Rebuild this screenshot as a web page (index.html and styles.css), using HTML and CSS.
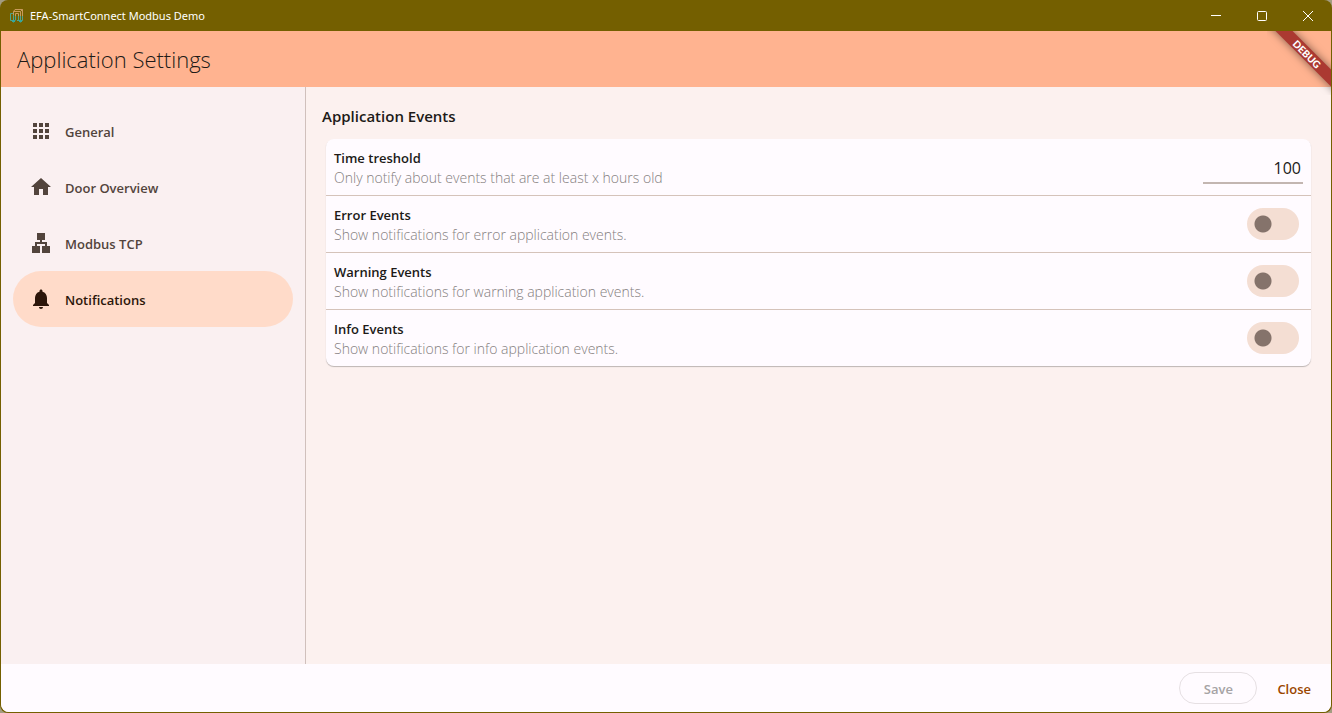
FILE: index.html
```html
<!DOCTYPE html>
<html lang="en">
<head>
<meta charset="utf-8">
<title>EFA-SmartConnect Modbus Demo</title>
<link rel="stylesheet" href="styles.css">
</head>
<body>
<div class="window">
  <header class="titlebar">
    <svg class="app-icon" viewBox="0 0 16 16" aria-hidden="true" fill="none">
      <path d="M4.500 7V3.500L6 1.500h7.500V8M4.500 3.500h7V8M6.500 8V5.500h3V8M11.500 3.500l2-2" stroke="#c99a5a"/>
      <path d="M4 5.500H1.500V12.500H5M4.500 7v7.500M6.500 8v4.500M9.500 8v4.500M8 12.500h5.500V8M11.500 8v6.500" stroke="#4fa58c"/>
      <path d="M3 12h3v2H3zM10 12h3v2h-3z" fill="#35a79c"/>
    </svg>
    <span class="window-title">EFA-SmartConnect Modbus Demo</span>
    <div class="window-controls">
      <button class="window-button" aria-label="Minimize"><svg viewBox="0 0 12 12"><path d="M1 5.500h10"/></svg></button>
      <button class="window-button" aria-label="Maximize"><svg viewBox="0 0 12 12"><rect x="1.500" y="1.500" width="9" height="9" rx="1"/></svg></button>
      <button class="window-button" aria-label="Close window"><svg viewBox="0 0 12 12"><path d="M1 1l10 10M11 1L1 11"/></svg></button>
    </div>
  </header>
  <div class="app">
    <div class="appbar"><h1 class="page-title">Application Settings</h1></div>
    <div class="debug-corner"><span class="debug-banner">DEBUG</span></div>
    <div class="content">
      <nav class="sidebar">
        <a class="nav-item" href="#general"><svg class="nav-icon" viewBox="0 0 24 24"><path d="M4 8h4V4H4zm6 12h4v-4h-4zm-6 0h4v-4H4zm0-6h4v-4H4zm6 0h4v-4h-4zm6-10v4h4V4zm-6 4h4V4h-4zm6 6h4v-4h-4zm0 6h4v-4h-4z"/></svg><span class="nav-label">General</span></a>
        <a class="nav-item" href="#doors"><svg class="nav-icon" viewBox="0 0 24 24"><path d="M10 20v-6h4v6h5v-8h3L12 3 2 12h3v8z"/></svg><span class="nav-label">Door Overview</span></a>
        <a class="nav-item" href="#modbus"><svg class="nav-icon" viewBox="0 0 24 24"><path d="M13 22h8v-7h-3v-4h-5V9h3V2H8v7h3v2H6v4H3v7h8v-7H8v-2h8v2h-3z"/></svg><span class="nav-label">Modbus TCP</span></a>
        <a class="nav-item nav-item-active" href="#notifications" aria-current="page"><svg class="nav-icon" viewBox="0 0 24 24"><path d="M12 22c1.100 0 2-.9 2-2h-4c0 1.100.89 2 2 2zm6-6v-5c0-3.070-1.640-5.640-4.500-6.320V4c0-.83-.67-1.500-1.500-1.500s-1.500.67-1.500 1.500v.68C7.630 5.360 6 7.920 6 11v5l-2 2v1h16v-1z"/></svg><span class="nav-label">Notifications</span></a>
      </nav>
      <main class="panel">
        <h2 class="section-title">Application Events</h2>
        <div class="card">
          <div class="row">
            <label class="row-text" for="threshold"><span class="row-title">Time treshold</span><span class="row-note">Only notify about events that are at least x hours old</span></label>
            <input class="number-field" id="threshold" type="text" inputmode="numeric" value="100">
          </div>
          <div class="row">
            <label class="row-text" for="errors"><span class="row-title">Error Events</span><span class="row-note">Show notifications for error application events.</span></label>
            <input class="switch" id="errors" type="checkbox" role="switch">
          </div>
          <div class="row">
            <label class="row-text" for="warnings"><span class="row-title">Warning Events</span><span class="row-note">Show notifications for warning application events.</span></label>
            <input class="switch" id="warnings" type="checkbox" role="switch">
          </div>
          <div class="row">
            <label class="row-text" for="infos"><span class="row-title">Info Events</span><span class="row-note">Show notifications for info application events.</span></label>
            <input class="switch" id="infos" type="checkbox" role="switch">
          </div>
        </div>
      </main>
    </div>
    <footer class="actions">
      <button class="button button-outlined" disabled>Save</button>
      <button class="button button-text">Close</button>
    </footer>
  </div>
</div>
</body>
</html>
```
FILE: styles.css
```css
* { box-sizing: border-box; }
body {
  margin: 0;
  background: #a39c80;
  color: #201a17;
  font-family: "Open Sans", "Noto Sans", sans-serif;
  font-size: 13px;
  line-height: 20px;
}
button, input { font: inherit; }
.window {
  display: flex;
  flex-direction: column;
  min-height: 100vh;
  padding: 0 1px 1px;
  border-radius: 8px;
  background: #745f00;
  overflow: hidden;
}
.titlebar { display: flex; align-items: center; height: 31px; padding-left: 8px; color: #fff; }
.app-icon { width: 16px; height: 16px; }
.window-title { margin-left: 5px; font-family: "Noto Sans", sans-serif; font-size: 11px; }
.window-controls { display: flex; align-self: stretch; margin-left: auto; }
.window-button { display: grid; place-items: center; width: 46px; padding: 0; border: 0; background: none; }
.window-button svg { width: 12px; height: 12px; fill: none; stroke: #fff; }
.app {
  position: relative;
  display: flex;
  flex: 1;
  flex-direction: column;
  border-radius: 0 0 8px 8px;
  background: #fcf1ef;
  overflow: hidden;
}
.appbar { display: flex; align-items: center; height: 56px; padding: 0 16px; background: #ffb390; }
.page-title { margin: 0; font-size: 22px; font-weight: 300; line-height: 28px; }
.debug-corner { position: absolute; top: 0; right: 0; width: 64px; height: 64px; overflow: hidden; pointer-events: none; }
.debug-banner {
  position: absolute;
  top: 17px;
  right: -32px;
  width: 112px;
  height: 12px;
  background: #ab3931;
  box-shadow: 0 0 8px rgba(0, 0, 0, 0.5);
  color: #fff;
  font-family: Lato, sans-serif;
  font-size: 10px;
  font-weight: 900;
  line-height: 12px;
  text-align: center;
  transform: rotate(45deg);
}
.content { display: flex; flex: 1; }
.sidebar { display: flex; flex-direction: column; width: 305px; padding: 16px 12px; background: #faf0f1; border-right: 1px solid #d0c0bc; }
.nav-item {
  display: flex;
  align-items: center;
  gap: 12px;
  height: 56px;
  padding: 0 16px;
  border-radius: 28px;
  color: #52443c;
  font-weight: 600;
  text-decoration: none;
}
.nav-item-active { background: #ffdbc9; color: #2c160a; }
.nav-icon { width: 24px; height: 24px; fill: currentColor; }
.nav-label { padding-top: 2px; }
.panel { flex: 1; padding: 17px 20px 16px 16px; }
.section-title { margin: 0 0 11px; font-size: 15px; font-weight: 600; line-height: 24px; }
.card { margin-left: 4px; border-radius: 8px; background: #fffbff; box-shadow: 0 1px 1px rgba(0, 0, 0, 0.25); }
.row { display: flex; align-items: center; justify-content: space-between; min-height: 56px; padding: 0 8px; }
.row + .row { border-top: 1px solid #d5c3ba; min-height: 57px; }
.row-text { display: flex; flex-direction: column; padding-top: 2px; }
.row-title { font-weight: 600; }
.row-note { color: #857f80; font-size: 14px; font-weight: 300; }
.number-field {
  width: 100px;
  height: 30px;
  margin-top: 4px;
  padding: 0 2px;
  border: 0;
  border-bottom: 2px solid #c3b6b1;
  background: none;
  color: #201a17;
  font-size: 16px;
  text-align: right;
}
.switch { width: 52px; height: 32px; margin: 0 4px; border-radius: 16px; background: radial-gradient(circle at 16px 16px, #85736b 8px, #f4ded3 9px); appearance: none; }
.switch:checked { background: radial-gradient(circle at 36px 16px, #fff 12px, #9a4600 13px); }
.actions { display: flex; align-items: center; justify-content: flex-end; gap: 8px; min-height: 48px; padding: 8px; background: #fffbff; }
.button { height: 32px; padding: 2px 12px 0; border: 0; border-radius: 16px; background: none; font-weight: 600; }
.button-outlined { width: 78px; border: 1px solid #e6e0e3; color: #a6a3a5; }
.button-text { color: #9a4600; }
```
